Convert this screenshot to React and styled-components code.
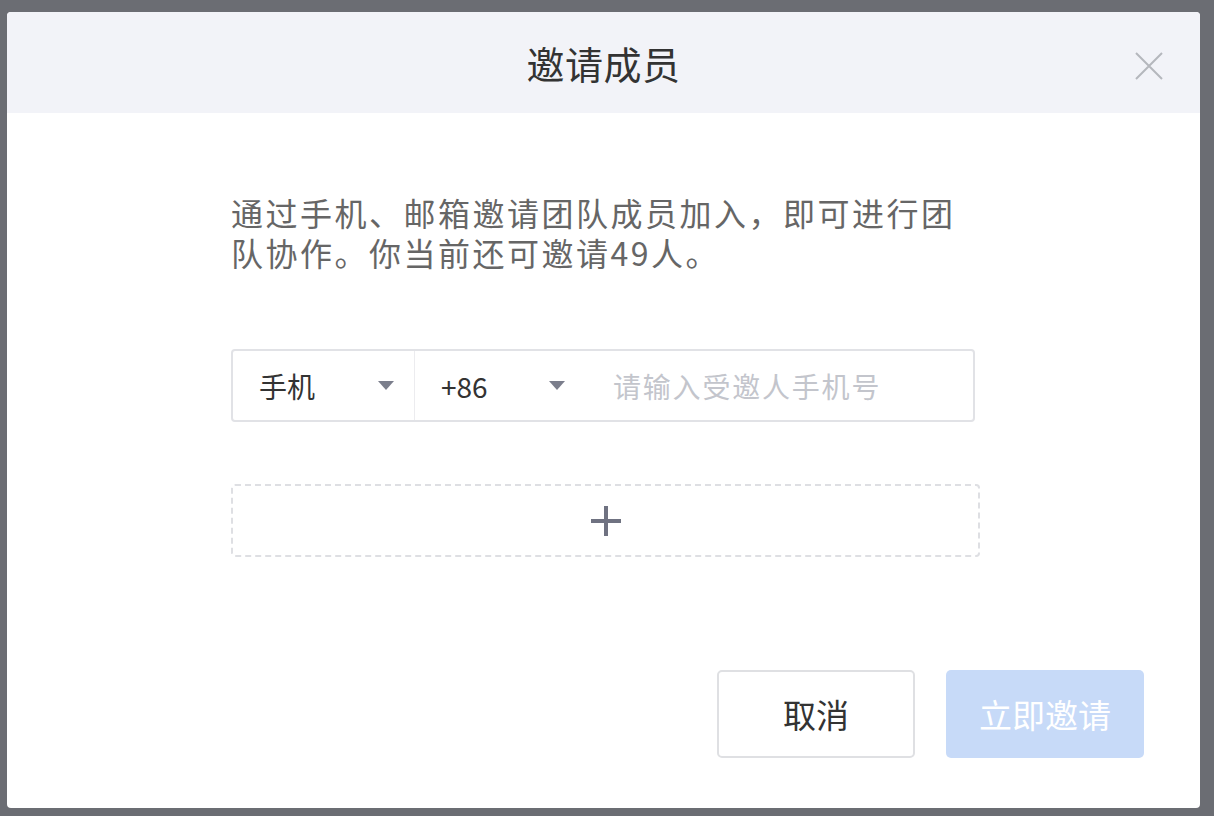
import React from 'react';
import styled, { createGlobalStyle } from 'styled-components';

const GlobalStyle = createGlobalStyle`
	html, body {
		margin: 0;
		padding: 0;
		background: #6b6d73;
		font-family: "Noto Sans CJK SC", "Noto Sans", sans-serif;
	}
`;

const Overlay = styled.div`
	width: 1214px;
	height: 816px;
	padding: 12px 14px 8px 7px;
	box-sizing: border-box;
	background: #6b6d73;
`;

const Dialog = styled.div`
	position: relative;
	display: flex;
	flex-direction: column;
	height: 100%;
	background: #fff;
	border-radius: 4px;
	overflow: hidden;
`;

const Header = styled.div`
	display: flex;
	align-items: center;
	justify-content: center;
	height: 101px;
	flex-shrink: 0;
	background: #f2f3f8;
`;

const Title = styled.h2`
	margin: 0;
	font-size: 38px;
	font-weight: 400;
	color: #333;
	letter-spacing: 0.5px;
`;

const Close = styled.button`
	position: absolute;
	top: 40px;
	right: 37px;
	width: 28px;
	height: 28px;
	padding: 0;
	border: none;
	background: transparent;
	cursor: pointer;
`;

const Body = styled.div`
	display: flex;
	flex-direction: column;
	flex: 1;
	padding: 79px 56px 50px 224px;
`;

const Desc = styled.p`
	margin: 0;
	width: 750px;
	font-size: 32px;
	line-height: 40px;
	letter-spacing: 2.5px;
	color: #666;
`;

const InputRow = styled.div`
	display: flex;
	align-items: center;
	width: 744px;
	height: 73px;
	margin-top: 77px;
	box-sizing: border-box;
	border: 2px solid #e1e2e6;
	border-radius: 4px;
`;

const Select = styled.div`
	display: flex;
	align-items: center;
	justify-content: space-between;
	box-sizing: border-box;
	width: ${(p) => p.$width}px;
	height: 100%;
	padding: 0 ${(p) => p.$right}px 0 ${(p) => p.$left}px;
	border-right: ${(p) => (p.$divider ? '1px solid #ececef' : 'none')};
	font-size: 28px;
	color: #333;
`;

const Caret = styled.span`
	width: 0;
	height: 0;
	border-left: 8px solid transparent;
	border-right: 8px solid transparent;
	border-top: 9px solid #7b7e8c;
`;

const Input = styled.input`
	flex: 1;
	min-width: 0;
	height: 100%;
	padding: 0 0 0 38px;
	border: none;
	outline: none;
	background: transparent;
	font-family: inherit;
	font-size: 28px;
	letter-spacing: 1.8px;
	color: #333;
	&::placeholder {
		color: #c3c5cc;
	}
`;

const AddBox = styled.button`
	display: flex;
	align-items: center;
	justify-content: center;
	width: 749px;
	height: 73px;
	margin-top: 62px;
	padding: 0;
	box-sizing: border-box;
	border: 2px dashed #dedfe3;
	border-radius: 4px;
	background: #fff;
	cursor: pointer;
`;

const Footer = styled.div`
	display: flex;
	justify-content: flex-end;
	gap: 31px;
	margin-top: auto;
`;

const Button = styled.button`
	width: 198px;
	height: 88px;
	box-sizing: border-box;
	border-radius: 5px;
	border: ${(p) => (p.$primary ? 'none' : '2px solid #dfe0e3')};
	background: ${(p) => (p.$primary ? '#c7daf8' : '#fff')};
	color: ${(p) => (p.$primary ? '#fff' : '#333')};
	font-family: inherit;
	font-size: 33px;
	cursor: pointer;
`;

export default function App() {
	return (
		<>
			<GlobalStyle />
			<Overlay>
				<Dialog>
					<Header>
						<Title>邀请成员</Title>
					</Header>
					<Close aria-label="关闭">
						<svg width="28" height="28" viewBox="0 0 28 28">
							<path d="M1 1 L27 27 M27 1 L1 27" stroke="#b5b7bd" strokeWidth="2" />
						</svg>
					</Close>
					<Body>
						<Desc>
							通过手机、邮箱邀请团队成员加入，即可进行团队协作。你当前还可邀请49人。
						</Desc>
						<InputRow>
							<Select $width={182} $left={26} $right={20} $divider>
								手机
								<Caret />
							</Select>
							<Select $width={160} $left={26} $right={10}>
								+86
								<Caret />
							</Select>
							<Input placeholder="请输入受邀人手机号" />
						</InputRow>
						<AddBox aria-label="添加">
							<svg width="32" height="32" viewBox="0 0 32 32">
								<path d="M16 1 V31 M1 16 H31" stroke="#6f7281" strokeWidth="4" />
							</svg>
						</AddBox>
						<Footer>
							<Button>取消</Button>
							<Button $primary>立即邀请</Button>
						</Footer>
					</Body>
				</Dialog>
			</Overlay>
		</>
	);
}
